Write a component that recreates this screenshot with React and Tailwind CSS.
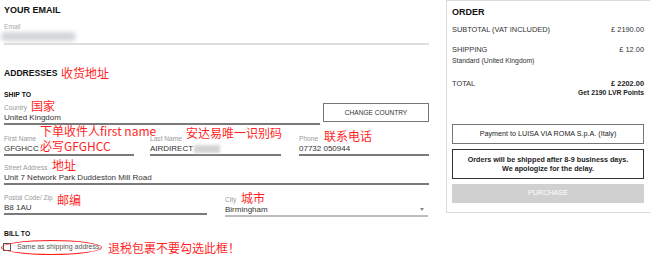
import React from 'react';

const Field = ({ label, value, className = '', line = 'border-[#7a7a7a]', children }) => (
  <div className={className}>
    <div className="text-[6.6px] leading-[8px] text-[#9a9a9a]">{label}</div>
    <div className={`mt-[1px] h-[10px] text-[8px] leading-[10px] text-[#333] border-b-2 box-content ${line}`}>
      {value}
      {children}
    </div>
  </div>
);

const Note = ({ className, children }) => (
  <span
    className={`absolute text-[12px] leading-[12px] text-[#ff1f1f] whitespace-nowrap font-['Noto_Sans_CJK_SC','Microsoft_YaHei',sans-serif] ${className}`}
  >
    {children}
  </span>
);

const OrderRow = ({ label, sub, price, extra }) => (
  <div className="flex justify-between text-[7.4px] leading-[9px] text-[#333]">
    <div>
      <div>{label}</div>
      {sub && <div className="mt-[2px] text-[6.8px]">{sub}</div>}
    </div>
    <div className="text-right">
      <div className={extra ? 'font-bold text-[#222]' : ''}>{price}</div>
      {extra && <div className="font-bold text-[6.8px] text-[#222]">{extra}</div>}
    </div>
  </div>
);

export default function App() {
  return (
    <div className="flex w-[650px] h-[261px] overflow-hidden bg-white font-['Liberation_Sans',Arial,sans-serif]">
      {/* left: form */}
      <div className="relative w-[446px] shrink-0 pl-[4px] pr-[17px]">
        <h1 className="pt-[4px] text-[9px] leading-[12px] font-bold text-[#111]">YOUR EMAIL</h1>

        <div className="mt-[7px]">
          <div className="text-[6.6px] leading-[8px] text-[#aaa]">Email</div>
          <div className="h-[11px] border-b-2 border-[#dedede] box-content">
            <div className="ml-[-3px] mt-[1px] h-[9px] w-[75px] rounded-full bg-[#d3d6d9] blur-[2px]" />
          </div>
        </div>

        <h2 className="mt-[22px] text-[8.6px] leading-[12px] font-bold text-[#111]">ADDRESSES</h2>

        <div className="mt-[12px] text-[6.8px] leading-[8px] font-bold text-[#111]">SHIP TO</div>

        <div className="flex items-start">
          <Field className="mt-[5px] w-[316px]" label="Country" value="United Kingdom" />
          <button className="ml-[3px] mt-[4px] h-[19px] w-[106px] border border-[#777] text-[6.6px] text-[#333]">
            CHANGE COUNTRY
          </button>
        </div>

        <div className="mt-[10px] flex">
          <Field className="w-[130px]" label="First Name" value="GFGHCC" />
          <Field className="ml-[16px] w-[131px]" label="Last Name" value="AIRDIRECT">
            <span className="ml-[1px] inline-block h-[8px] w-[26px] align-middle bg-[#d4d4d4] blur-[1.5px]" />
          </Field>
          <Field className="ml-[18px] w-[130px]" label="Phone" value="07732 050944" />
        </div>

        <Field className="mt-[8px]" label="Street Address" value="Unit 7 Network Park Duddeston Mill Road" />

        <div className="mt-[9px] flex items-start">
          <Field className="w-[203px]" label="Postal Code/ Zip" value="B8 1AU" />
          <div className="ml-[18px] mt-[2px] w-[203px]">
            <div className="text-[6.6px] leading-[8px] text-[#9a9a9a]">City</div>
            <div className="relative mt-[1px] h-[10px] text-[8px] leading-[10px] text-[#333] border-b-2 border-[#bdbdbd] box-content">
              Birmingham
              <span className="absolute right-[4px] top-[3px] h-0 w-0 border-x-[2.5px] border-t-[3px] border-x-transparent border-t-[#888]" />
            </div>
          </div>
        </div>

        <div className="mt-[13px] text-[6.8px] leading-[8px] font-bold text-[#111]">BILL TO</div>

        <div className="mt-[4px] flex items-center">
          <span className="ml-[-1px] h-[8px] w-[8px] border border-[#555] bg-white" />
          <span className="ml-[6px] text-[7px] leading-[10px] text-[#555]">Same as shipping address</span>
        </div>

        {/* annotations */}
        <span className="absolute left-[1px] top-[240px] h-[15px] w-[101px] rounded-[50%] border-[1.5px] border-[#ff1f1f]" />
        <Note className="left-[61px] top-[67px]">收货地址</Note>
        <Note className="left-[31px] top-[100px]">国家</Note>
        <Note className="left-[40px] top-[125px]">下单收件人first name</Note>
        <Note className="left-[40px] top-[140px]">必写GFGHCC</Note>
        <Note className="left-[186px] top-[127px]">安达易唯一识别码</Note>
        <Note className="left-[324px] top-[130px]">联系电话</Note>
        <Note className="left-[52px] top-[159px]">地址</Note>
        <Note className="left-[57px] top-[194px]">邮编</Note>
        <Note className="left-[241px] top-[192px]">城市</Note>
        <Note className="left-[108px] top-[242px] text-[11.5px]">退税包裹不要勾选此框！</Note>
      </div>

      {/* right: order summary */}
      <div className="h-[213px] w-[204px] shrink-0 border border-r-0 border-[#dcdcdc] pl-[5px] pr-[6px]">
        <div className="mt-[5px] text-[9px] leading-[12px] font-bold text-[#111]">ORDER</div>
        <div className="mt-[7px]">
          <OrderRow label="SUBTOTAL (VAT INCLUDED)" price="£ 2190.00" />
        </div>
        <div className="mt-[11px]">
          <OrderRow label="SHIPPING" sub="Standard (United Kingdom)" price="£ 12.00" />
        </div>
        <div className="mt-[14px]">
          <OrderRow label="TOTAL" price="£ 2202.00" extra="Get 2190 LVR Points" />
        </div>

        <div className="mt-[27px] flex h-[20px] items-center justify-center border border-[#777] text-[7.2px] text-[#222]">
          Payment to LUISA VIA ROMA S.p.A. (Italy)
        </div>
        <div className="mt-[5px] flex h-[30px] flex-col items-center justify-center border border-[#333] text-[7.2px] leading-[9px] font-bold text-[#222]">
          <div>Orders will be shipped after 8-9 business days.</div>
          <div>We apologize for the delay.</div>
        </div>
        <div className="mt-[5px] flex h-[19px] items-center justify-center bg-[#d0d0d0] text-[7.2px] text-white">
          PURCHASE
        </div>
      </div>
    </div>
  );
}
